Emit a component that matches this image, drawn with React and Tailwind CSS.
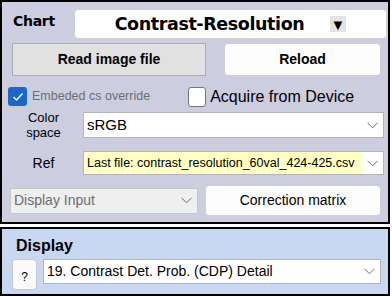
import { useState } from 'react';

function Chevron({ color = '#6b6b6b' }) {
  return (
    <svg width="11" height="7" viewBox="0 0 11 7" fill="none">
      <path d="M0.5 0.8 L5.5 5.8 L10.5 0.8" stroke={color} strokeWidth="1" />
    </svg>
  );
}

function Select({ value, className = '', textClass = '', chevronBg = 'bg-white' }) {
  return (
    <div className={`flex items-stretch border border-[#b5b5b5] ${className}`}>
      <div className={`flex-1 flex items-center pl-[3px] truncate ${textClass}`}>{value}</div>
      <div className={`w-[22px] flex items-center justify-center ${chevronBg}`}>
        <Chevron />
      </div>
    </div>
  );
}

function App() {
  const [embedded, setEmbedded] = useState(true);
  const [acquire, setAcquire] = useState(false);

  return (
    <div className="w-[392px] h-[296px] bg-white font-['Liberation_Sans',Arial,sans-serif] text-black overflow-hidden">
      {/* chart panel */}
      <div className="w-[390px] h-[224px] border-2 border-black bg-[#cdcde0]">
        <div className="flex items-center h-[30px] mt-[7px]">
          <span className="ml-[11px] w-[61px] text-[14px] font-bold font-['DejaVu_Sans',sans-serif] tracking-[-0.3px] -mt-[6px]">Chart</span>
          <div className="w-[313px] h-[30px] bg-white rounded-[4px] border border-[#d0d0d0] flex items-center">
            <span className="flex-1 text-center pl-[14px] text-[17.5px] font-bold font-['DejaVu_Sans',sans-serif] tracking-[-0.4px]">Contrast-Resolution</span>
            <span className="w-[16px] h-[16px] mr-[40px] bg-[#e3e3e3] flex items-center justify-center text-[15px] leading-none">▼</span>
          </div>
        </div>

        <div className="flex h-[33px] mt-[4px]">
          <button className="ml-[10px] w-[194px] h-[33px] bg-[#e1e1e1] border border-[#adadad] text-[14px] font-bold">Read image file</button>
          <button className="ml-[18px] w-[157px] h-[33px] bg-[#fdfdfd] border border-[#cfcfcf] rounded-[4px] text-[14px] font-bold">Reload</button>
        </div>

        <div className="flex items-center h-[21px] mt-[10px]">
          <button
            onClick={() => setEmbedded(!embedded)}
            className={`ml-[6px] w-[19px] h-[19px] rounded-[3px] flex items-center justify-center ${embedded ? 'bg-[#1c68c8]' : 'bg-white border border-[#767676]'}`}
          >
            {embedded && (
              <svg width="12" height="10" viewBox="0 0 12 10" fill="none">
                <path d="M1.5 5 L4.5 8 L10.5 1.5" stroke="white" strokeWidth="1.4" />
              </svg>
            )}
          </button>
          <span className="ml-[5px] text-[12.5px] text-[#6d6d6d]">Embeded cs override</span>
          <button
            onClick={() => setAcquire(!acquire)}
            className={`ml-[38px] w-[18px] h-[20px] rounded-[3px] border border-[#767676] ${acquire ? 'bg-[#1c68c8]' : 'bg-white'}`}
          />
          <span className="ml-[4px] text-[16px]">Acquire from Device</span>
        </div>

        <div className="flex items-center h-[26px] mt-[5px]">
          <div className="w-[81px] text-center text-[13px] leading-[15px] pl-[2px]">Color<br />space</div>
          <Select value="sRGB" className="w-[301px] h-[26px] bg-white" textClass="text-[15px]" chevronBg="bg-white" />
        </div>

        <div className="flex items-center h-[24px] mt-[13px]">
          <div className="w-[81px] text-center text-[14px] pl-[2px]">Ref</div>
          <Select value="Last file: contrast_resolution_60val_424-425.csv" className="w-[301px] h-[24px] bg-[#ffffc3]" textClass="text-[12.5px]" chevronBg="bg-white" />
        </div>

        <div className="flex items-center h-[31px] mt-[10px]">
          <Select value="Display Input" className="ml-[8px] w-[188px] h-[26px] bg-[#efefef] border-[#c8c8c8]" textClass="text-[14px] text-[#6d6d6d]" chevronBg="bg-[#efefef]" />
          <button className="ml-[7px] w-[176px] h-[31px] bg-[#fdfdfd] border border-[#cfcfcf] rounded-[4px] text-[14px]">Correction matrix</button>
        </div>
      </div>

      {/* display panel */}
      <div className="mt-[3px] w-[390px] h-[69px] border-2 border-black bg-[#c8d8f2]">
        <div className="ml-[14px] mt-[7px] text-[16px] font-bold leading-[20px]">Display</div>
        <div className="flex mt-[3px]">
          <button className="ml-[10px] w-[25px] h-[31px] bg-[#fafafa] border border-[#c8c8c8] rounded-[4px] text-[12px] pt-[4px]">?</button>
          <Select value="19. Contrast Det. Prob. (CDP) Detail" className="ml-[6px] w-[338px] h-[25px] bg-white" textClass="text-[14px]" chevronBg="bg-white" />
        </div>
      </div>
    </div>
  );
}

export default App;
